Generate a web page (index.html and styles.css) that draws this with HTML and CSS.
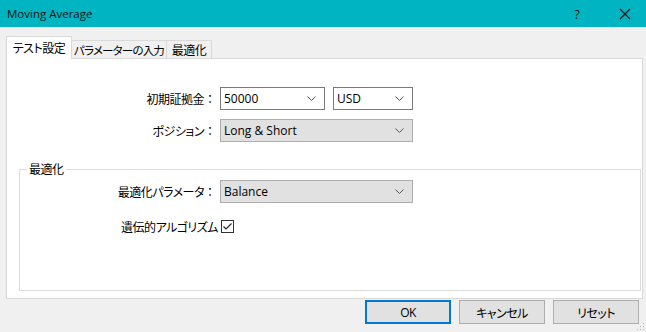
FILE: index.html
```html
<!DOCTYPE html>
<html lang="ja">
<head>
    <meta charset="UTF-8">
    <title>Moving Average</title>
    <link rel="stylesheet" href="styles.css">
</head>
<body>
    <div class="window">
        <!-- Title bar -->
        <div class="titlebar">
            <span class="title">Moving Average</span>
            <span class="help">?</span>
            <span class="close">
                <svg width="12" height="12" viewBox="0 0 12 12"><path d="M1 1 L11 11 M11 1 L1 11" stroke="#111" stroke-width="1.2" fill="none"/></svg>
            </span>
        </div>

        <div class="content">
            <!-- Tabs -->
            <div class="tabs">
                <div class="tab active tab-test">テスト設定</div>
                <div class="tab tab-params">パラメーターの入力</div>
                <div class="tab tab-opt">最適化</div>
            </div>

            <div class="panel">
                <div class="form top-form">
                    <div class="row">
                        <label class="lbl">初期証拠金<span class="colon">：</span></label>
                        <div class="select white w-deposit">
                            <span>50000</span>
                            <svg class="chev" width="9" height="5" viewBox="0 0 9 5"><path d="M0.5 0.5 L4.5 4.5 L8.5 0.5" stroke="#555" fill="none"/></svg>
                        </div>
                        <div class="select white w-currency">
                            <span>USD</span>
                            <svg class="chev" width="9" height="5" viewBox="0 0 9 5"><path d="M0.5 0.5 L4.5 4.5 L8.5 0.5" stroke="#555" fill="none"/></svg>
                        </div>
                    </div>
                    <div class="row">
                        <label class="lbl">ポジション<span class="colon">：</span></label>
                        <div class="select w-wide">
                            <span>Long &amp; Short</span>
                            <svg class="chev" width="9" height="5" viewBox="0 0 9 5"><path d="M0.5 0.5 L4.5 4.5 L8.5 0.5" stroke="#555" fill="none"/></svg>
                        </div>
                    </div>
                </div>

                <!-- Optimization group -->
                <fieldset class="group">
                    <legend>最適化</legend>
                    <div class="row">
                        <label class="lbl">最適化パラメータ<span class="colon">：</span></label>
                        <div class="select w-wide">
                            <span>Balance</span>
                            <svg class="chev" width="9" height="5" viewBox="0 0 9 5"><path d="M0.5 0.5 L4.5 4.5 L8.5 0.5" stroke="#555" fill="none"/></svg>
                        </div>
                    </div>
                    <div class="row row-check">
                        <label class="lbl lbl-check">遺伝的アルゴリズム</label>
                        <span class="checkbox">
                            <svg width="13" height="13" viewBox="0 0 13 13"><rect x="0.5" y="0.5" width="12" height="12" fill="#fff" stroke="#333"/><path d="M2.5 6.5 L5 9 L10.5 3.5" stroke="#222" stroke-width="1.1" fill="none"/></svg>
                        </span>
                    </div>
                </fieldset>
            </div>

            <!-- Dialog buttons -->
            <div class="buttons">
                <button class="btn default">OK</button>
                <button class="btn">キャンセル</button>
                <button class="btn">リセット</button>
            </div>
        </div>

        <svg class="grip" width="9" height="9" viewBox="0 0 9 9">
            <rect x="7" y="1" width="1" height="1" fill="#b8b8b8"/>
            <rect x="4" y="4" width="1" height="1" fill="#b8b8b8"/>
            <rect x="7" y="4" width="1" height="1" fill="#b8b8b8"/>
            <rect x="1" y="7" width="1" height="1" fill="#b8b8b8"/>
            <rect x="4" y="7" width="1" height="1" fill="#b8b8b8"/>
            <rect x="7" y="7" width="1" height="1" fill="#b8b8b8"/>
        </svg>
    </div>
</body>
</html>
```

FILE: styles.css
```css
/* General styling */
body {
    margin: 0;
    padding: 0;
    font-family: 'Open Sans', 'Noto Sans CJK JP', sans-serif;
    font-size: 12px;
    color: #000;
}
.window {
    position: relative;
    width: 646px;
    height: 332px;
    background: #f0f0f0;
    overflow: hidden;
}
.tabs, .lbl, .group legend, .btn {
    font-family: 'Noto Sans CJK JP', sans-serif;
    font-feature-settings: "palt";
    letter-spacing: -0.5px;
    white-space: nowrap;
}
.colon {
    font-feature-settings: normal;
    letter-spacing: 0;
}

/* Title bar */
.titlebar {
    height: 27px;
    background: #00b4c2;
    display: flex;
    align-items: center;
    padding-left: 7px;
}
.title {
    flex: 1;
    font-size: 11.5px;
    color: #111;
}
.help {
    width: 30px;
    font-size: 13px;
    color: #111;
    margin-right: 24px;
    text-align: center;
}
.close {
    width: 18px;
    margin-right: 12px;
    display: flex;
    justify-content: center;
}

.content {
    padding: 9px 3px 0 6px;
}

/* Tabs */
.tabs {
    display: flex;
    align-items: flex-end;
    height: 22px;
}
.tab {
    box-sizing: border-box;
    height: 18px;
    border: 1px solid #d9d9d9;
    border-bottom: none;
    background: #f0f0f0;
    margin-left: -1px;
    display: flex;
    align-items: center;
    justify-content: center;
    line-height: 16px;
}
.tab-params {
    font-size: 11.5px;
    letter-spacing: -0.8px;
}
.tab.active {
    position: relative;
    z-index: 1;
    height: 23px;
    margin-left: 0;
    margin-bottom: -1px;
    background: #fff;
    padding-bottom: 1px;
}
.tab-test { width: 66px; }
.tab-params { width: 96px; }
.tab-opt { width: 46px; }

/* Panel */
.panel {
    box-sizing: border-box;
    width: 637px;
    height: 241px;
    background: #fff;
    border: 1px solid #d9d9d9;
    padding: 28px 1px 0 12px;
}
.row {
    display: flex;
    align-items: center;
    height: 23px;
}
.top-form .row + .row {
    margin-top: 9px;
}
.top-form {
    margin-left: -12px;
}
.top-form .lbl {
    width: 213px;
}
.lbl {
    box-sizing: border-box;
    width: 200px;
    text-align: right;
    padding-right: 4px;
    line-height: 16px;
}
.select {
    box-sizing: border-box;
    height: 23px;
    border: 1px solid #adadad;
    background: #e1e1e1;
    display: flex;
    align-items: center;
    padding: 0 8px 0 3px;
}
.select span {
    flex: 1;
}
.select.white {
    background: #fff;
    border-color: #7a7a7a;
}
.w-deposit { width: 105px; }
.w-currency { width: 80px; margin-left: 8px; }
.w-wide { width: 193px; }

/* Group box */
.group {
    margin: 19px 0 0 0;
    padding: 3px 0 52px 0;
    border: 1px solid #dcdcdc;
    min-width: 0;
}
.group legend {
    padding: 0 2px;
    margin-left: 7px;
    line-height: 16px;
}
.row-check {
    margin-top: 12px;
}
.lbl-check {
    padding-right: 3px;
    width: 201px;
}
.checkbox {
    display: flex;
}

/* Buttons */
.buttons {
    display: flex;
    justify-content: flex-end;
    gap: 8px;
    padding: 1px 4px 0 0;
}
.btn {
    box-sizing: border-box;
    width: 86px;
    height: 24px;
    border: 1px solid #adadad;
    background: #e1e1e1;
    font-size: 12px;
    color: #000;
    padding: 0;
}
.btn.default {
    border: 2px solid #0078d7;
    font-family: 'Open Sans', sans-serif;
}
.grip {
    position: absolute;
    right: 1px;
    bottom: 1px;
}
```
